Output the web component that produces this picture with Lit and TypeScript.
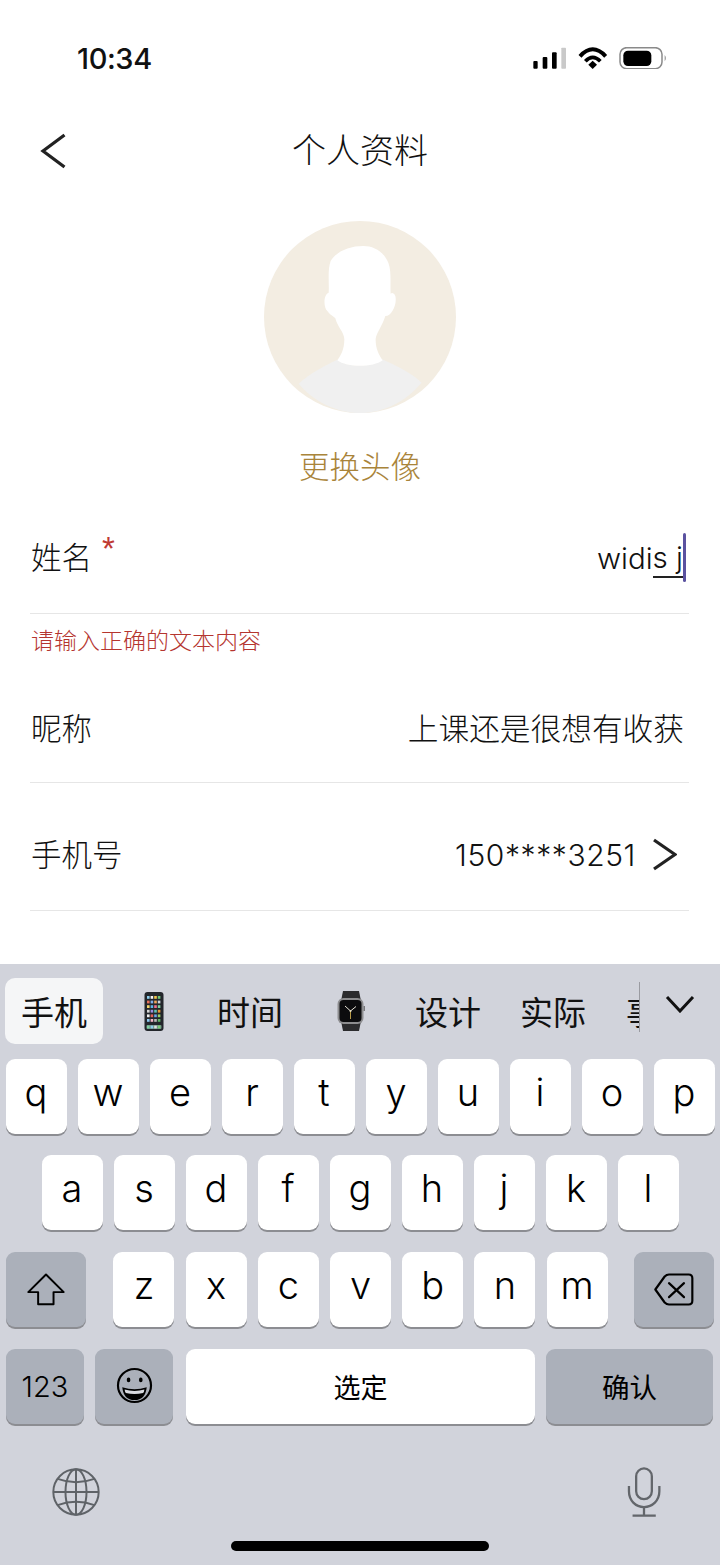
import { LitElement, html, css, svg } from 'lit';
import { customElement } from 'lit/decorators.js';

const ROW_1 = ['q', 'w', 'e', 'r', 't', 'y', 'u', 'i', 'o', 'p'];
const ROW_2 = ['a', 's', 'd', 'f', 'g', 'h', 'j', 'k', 'l'];
const ROW_3 = ['z', 'x', 'c', 'v', 'b', 'n', 'm'];

const APP_COLORS = [
  '#8fd0ee', '#f4f4f4', '#f3c54b', '#6fc77a',
  '#e8705a', '#7fb0ea', '#f2a65a', '#c9d4dc',
  '#f5d76e', '#5db5e8', '#ee6f8e', '#7ed0a0',
  '#d8d8d8', '#9a8fe0', '#60c4b4', '#e89a3c',
  '#f0f0f0', '#e0605a', '#6aa6e8', '#9ad06c',
  '#8ec9f0', '#f4b8c8', '#bcbcbc', '#5fb86a',
];

const phoneIcon = html`<svg width="20" height="39" viewBox="0 0 20 39">
  <rect x="0.5" y="0" width="19" height="39" rx="3" fill="#23262b" />
  ${APP_COLORS.map((c, i) =>
    svg`<rect x="${3 + (i % 4) * 3.6}" y="${4 + Math.floor(i / 4) * 4.6}" width="2.6" height="2.8" fill="${c}" />`
  )}
  <rect x="2.5" y="33" width="15" height="4" rx="1" fill="#6f8f86" />
  ${[0, 1, 2, 3].map(i => svg`<rect x="${3 + i * 3.6}" y="33.6" width="2.6" height="2.8" fill="${['#7ed0a0', '#8fd0ee', '#e0e0e0', '#7ed07a'][i]}" />`)}
</svg>`;

const watchIcon = html`<svg width="28" height="40" viewBox="0 0 28 40">
  <path d="M6 0H22L24 10H4Z" fill="#2c2c2e" />
  <path d="M4 30H24L22 40H6Z" fill="#2c2c2e" />
  <rect x="0.5" y="7" width="26" height="26" rx="6" fill="#8d8d8f" />
  <rect x="26.5" y="15" width="1.5" height="5" fill="#77777a" />
  <rect x="2.5" y="9" width="22" height="22" rx="4" fill="#0c0c0e" />
  <path d="M13.5 20 L8 15 M13.5 20 L19 15.5" stroke="#e8e4d8" stroke-width="1" fill="none" />
  <path d="M13.5 20 V28" stroke="#c9a94e" stroke-width="0.9" fill="none" />
  <circle cx="13.5" cy="20" r="1" fill="#e8e0c0" />
</svg>`;

const backspaceIcon = html`<svg width="40" height="33" viewBox="880 98 120 98" fill="none" stroke="#000" stroke-width="6.5" stroke-linejoin="round" stroke-linecap="round">
  <path d="M925 102H984Q995 102 995 113V181Q995 192 984 192H925Q918 192 912 186L884 147L912 108Q918 102 925 102Z" />
  <path d="M925 128L970 170M970 128L925 170" />
</svg>`;

@customElement('app-root')
export class AppRoot extends LitElement {
  static styles = css`
    :host {
      display: block;
      width: 720px;
      height: 1565px;
      background: #fff;
      font-family: Inter, "Noto Sans CJK SC", sans-serif;
      color: #111;
      overflow: hidden;
    }

    .screen {
      height: 1565px;
      display: flex;
      flex-direction: column;
    }

    .content {
      flex: 1;
    }

    .status {
      height: 46px;
      padding: 35px 53px 6px 77px;
      display: flex;
      justify-content: space-between;
      align-items: center;
    }

    .time {
      font-size: 29px;
      font-weight: 500;
      color: #111;
      letter-spacing: -0.4px;
    }

    .status-icons {
      display: flex;
      align-items: center;
      gap: 11px;
    }

    .nav {
      height: 68px;
      margin-top: 30px;
      padding: 0 40px;
      display: grid;
      grid-template-columns: 40px 1fr 40px;
      align-items: center;
    }

    .nav-title {
      text-align: center;
      font-size: 34px;
      font-weight: 300;
      line-height: 68px;
    }

    .avatar-block {
      margin-top: 36px;
      display: flex;
      flex-direction: column;
      align-items: center;
    }

    .avatar {
      display: block;
    }

    .avatar-link {
      margin-top: 32px;
      font-size: 30.5px;
      line-height: 44px;
      font-weight: 300;
      color: #a9843a;
    }

    .form {
      margin: 0 31px 0 30px;
    }

    .row {
      display: flex;
      justify-content: space-between;
      align-items: center;
      box-sizing: border-box;
      border-bottom: 1px solid #e6e6e6;
      font-size: 30.5px;
    }

    .name-row {
      margin-top: 23px;
      height: 102px;
      padding: 0 3px 10px 1px;
    }

    .nick-row {
      height: 126px;
      padding: 18px 5px 0 1px;
    }

    .phone-row {
      height: 128px;
      padding: 16px 12px 0 1px;
    }

    .label {
      font-weight: 300;
      line-height: 44px;
    }

    .star {
      color: #bf3a33;
      font-size: 33px;
      line-height: 0;
      vertical-align: 9px;
      margin-left: 10px;
      font-family: "Liberation Sans", sans-serif;
    }

    .value {
      font-size: 30.7px;
      font-weight: 300;
      line-height: 44px;
      display: flex;
      align-items: center;
    }

    .value.input-value {
      font-size: 29.5px;
      white-space: pre;
    }

    .marked {
      border-bottom: 2px solid #222;
      display: inline-block;
      line-height: 38px;
      white-space: pre;
    }

    .caret {
      width: 3px;
      height: 49px;
      border-radius: 2px;
      background: #5b52a0;
    }

    .phone-number {
      font-size: 30px;
      letter-spacing: 0.6px;
      margin-right: 16px;
    }

    .error {
      margin: 11px 0 0 1px;
      font-size: 23px;
      line-height: 32px;
      font-weight: 300;
      color: #b5352f;
    }

    .keyboard {
      height: 601px;
      box-sizing: border-box;
      background: #d1d3db;
      padding-top: 14px;
    }

    .candidates {
      height: 66px;
      display: flex;
      align-items: stretch;
      padding-left: 5px;
      font-size: 33px;
      font-weight: 400;
      color: #111;
    }

    .cand {
      display: flex;
      align-items: center;
      justify-content: center;
    }

    .cand.on {
      width: 98px;
      background: #f5f6f7;
      border-radius: 10px;
    }

    .w-phone { width: 102px; }
    .w-time { width: 90px; }
    .w-watch { width: 112px; }
    .w-design { width: 82px; }
    .w-real { width: 128px; }

    .cand.cut {
      width: 22px;
      overflow: hidden;
      justify-content: flex-start;
      padding-left: 9px;
      box-sizing: border-box;
    }

    .sep {
      width: 1px;
      height: 50px;
      align-self: center;
      margin-top: -8px;
      background: #9a9ba1;
    }

    .collapse {
      flex: 1;
      display: flex;
      justify-content: center;
      padding: 17px 0 0 0;
      box-sizing: border-box;
    }

    .keys {
      margin-top: 14.5px;
      display: flex;
      flex-direction: column;
      gap: 21.8px;
    }

    .key-row {
      display: flex;
      justify-content: center;
      gap: 11px;
    }

    .key-row.fourth {
      padding-right: 1px;
    }

    .key {
      height: 75px;
      width: 61px;
      box-sizing: border-box;
      background: #fff;
      border-radius: 9px;
      box-shadow: 0 2px 0 #8c8d92;
      display: flex;
      align-items: center;
      justify-content: center;
      font-size: 38px;
      font-weight: 350;
      color: #000;
      padding-bottom: 9px;
    }

    .key.dark {
      background: #abb0ba;
    }

    .key.fn {
      width: 80px;
      padding-bottom: 0;
    }

    .key-row.third {
      justify-content: space-between;
      padding: 0 6px;
    }

    .group {
      display: flex;
      gap: 11.2px;
      padding-left: 1px;
    }

    .key.num {
      width: 78px;
      font-size: 29px;
      font-weight: 300;
      padding-bottom: 0;
    }

    .key.emoji {
      width: 78px;
      margin-right: 2px;
      padding-bottom: 2px;
    }

    .key.space {
      width: 349px;
      font-size: 27px;
      font-weight: 400;
      padding-bottom: 0;
    }

    .key.confirm {
      width: 167px;
      font-size: 27.5px;
      font-weight: 400;
      padding-bottom: 0;
    }

    .system {
      margin-top: 43.5px;
      padding: 0 59px 0 52px;
      display: flex;
      justify-content: space-between;
      align-items: center;
    }

    .home {
      width: 258px;
      height: 10px;
      margin: 24px auto 0;
      border-radius: 5px;
      background: #000;
    }
  `;

  render() {
    return html`
      <div class="screen">
        <div class="content">
          <div class="status">
            <span class="time">10:34</span>
            <div class="status-icons">
              <svg width="34" height="22" viewBox="39 50 102 66">
                <rect x="40" y="92" width="13" height="23" rx="3" fill="#000" />
                <rect x="68" y="80" width="14" height="35" rx="3" fill="#000" />
                <rect x="96" y="66" width="14" height="49" rx="3" fill="#000" />
                <rect x="124" y="52" width="14" height="63" rx="2" fill="#c9c9c9" />
              </svg>
              <svg width="30" height="22" viewBox="173 50 90 66" fill="none" stroke="#000">
                <path d="M179 78Q217 36 256 78" stroke-width="12" />
                <path d="M195 93Q217 69 240 93" stroke-width="11" />
                <path d="M204 103L217 91L230 103L217 116Z" fill="#000" stroke="none" />
              </svg>
              <svg width="48" height="22" viewBox="296 49 144 66" fill="none">
                <rect x="299" y="51" width="126" height="63" rx="20" stroke="#8a8a8a" stroke-width="4.5" />
                <rect x="309" y="60" width="84" height="46" rx="14" fill="#000" />
                <path d="M433 73Q440 82 433 92Z" fill="#8a8a8a" />
              </svg>
            </div>
          </div>

          <div class="nav">
            <svg width="26" height="36" viewBox="0 0 26 36" fill="none" stroke="#222" stroke-width="3.2">
              <path d="M24.5 2L3 18L24.5 34" />
            </svg>
            <div class="nav-title">个人资料</div>
          </div>

          <div class="avatar-block">
            <svg class="avatar" width="192" height="192" viewBox="72 60 576 576">
              <circle cx="360" cy="348" r="288" fill="#f3ede2" />
              <path fill="#f0f0f0" d="M176 548C205 520 260 490 292 476C320 500 400 500 425 474C460 490 515 515 545 545C500 600 430 636 360 636C290 636 220 600 176 548Z" />
              <path fill="#fff" d="M370 135C330 135 290 150 272 180C262 205 268 250 266 275C250 280 250 320 262 330C270 342 280 345 286 352C292 378 312 392 313 415C313 445 302 465 292 478C320 500 400 500 428 478C416 460 406 440 407 413C410 395 428 372 436 345C455 345 472 310 466 285C462 275 455 275 452 278C450 250 455 210 445 185C430 150 400 135 370 135Z" />
            </svg>
            <div class="avatar-link">更换头像</div>
          </div>

          <div class="form">
            <div class="row name-row">
              <div class="label">姓名<span class="star">*</span></div>
              <div class="value input-value">widi<span class="marked">s j</span><span class="caret"></span></div>
            </div>
            <div class="error">请输入正确的文本内容</div>
            <div class="row nick-row">
              <div class="label">昵称</div>
              <div class="value">上课还是很想有收获</div>
            </div>
            <div class="row phone-row">
              <div class="label">手机号</div>
              <div class="value">
                <span class="phone-number">150****3251</span>
                <svg width="25" height="33" viewBox="0 0 25 33" fill="none" stroke="#222" stroke-width="3.2">
                  <path d="M2 2L23 16.5L2 31" />
                </svg>
              </div>
            </div>
          </div>
        </div>

        <div class="keyboard">
          <div class="candidates">
            <div class="cand on">手机</div>
            <div class="cand w-phone">${phoneIcon}</div>
            <div class="cand w-time">时间</div>
            <div class="cand w-watch">${watchIcon}</div>
            <div class="cand w-design">设计</div>
            <div class="cand w-real">实际</div>
            <div class="cand cut">事</div>
            <div class="sep"></div>
            <div class="collapse">
              <svg width="30" height="18" viewBox="0 0 30 18" fill="none" stroke="#111" stroke-width="3">
                <path d="M2 2L15 16L28 2" />
              </svg>
            </div>
          </div>

          <div class="keys">
            <div class="key-row">${ROW_1.map(k => html`<div class="key">${k}</div>`)}</div>
            <div class="key-row">${ROW_2.map(k => html`<div class="key">${k}</div>`)}</div>
            <div class="key-row third">
              <div class="key dark fn">
                <svg width="38" height="33" viewBox="81 97 116 100" fill="none" stroke="#000" stroke-width="6" stroke-linejoin="round">
                  <path d="M139 101L85 155H115V192H162V155H193Z" />
                </svg>
              </div>
              <div class="group">${ROW_3.map(k => html`<div class="key">${k}</div>`)}</div>
              <div class="key dark fn">${backspaceIcon}</div>
            </div>
            <div class="key-row fourth">
              <div class="key dark num">123</div>
              <div class="key dark emoji">
                <svg width="37" height="37" viewBox="345 382 112 112">
                  <circle cx="401" cy="438" r="50" fill="none" stroke="#000" stroke-width="6.5" />
                  <ellipse cx="383" cy="421" rx="5.5" ry="7" fill="#000" />
                  <ellipse cx="420" cy="421" rx="5.5" ry="7" fill="#000" />
                  <path d="M364 443Q401 456 438 443Q434 482 401 482Q368 482 364 443Z" fill="#000" />
                  <path d="M371 450Q401 459 431 450Q430 458 427 461Q401 467 375 461Q372 458 371 450Z" fill="#d8dae0" />
                </svg>
              </div>
              <div class="key space">选定</div>
              <div class="key dark confirm">确认</div>
            </div>
          </div>

          <div class="system">
            <svg width="48" height="48" viewBox="155 685 146 146" fill="none" stroke="#5f6368" stroke-width="6">
              <circle cx="228" cy="758" r="69" />
              <ellipse cx="228" cy="758" rx="32" ry="69" />
              <path d="M228 689V827M159 758H297" />
              <path d="M172 718Q228 738 284 718M172 798Q228 778 284 798" />
            </svg>
            <svg width="34" height="50" viewBox="798 678 104 152" fill="none" stroke="#63666b" stroke-width="7">
              <rect x="826" y="682" width="48" height="94" rx="24" />
              <path d="M804 736V752C804 780 824 800 850 800C876 800 897 780 897 752V736" />
              <path d="M850 800V825M815 826H886" />
            </svg>
          </div>
          <div class="home"></div>
        </div>
      </div>
    `;
  }
}
